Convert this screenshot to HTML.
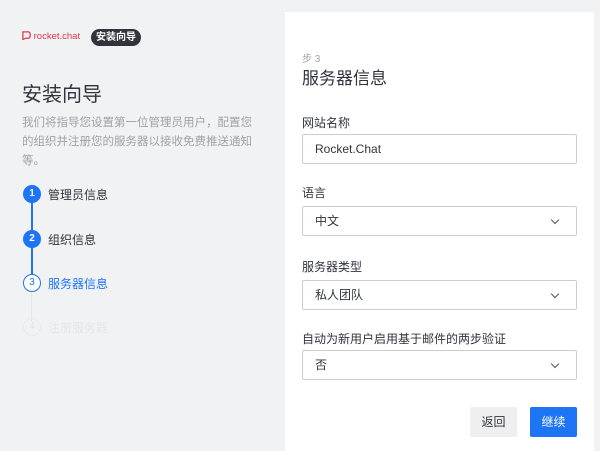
<html><head><style>
body{margin:0;width:600px;height:451px;background:#f1f2f4;font-family:"Liberation Sans","Noto Sans CJK SC",sans-serif;position:relative;overflow:hidden}
.a{position:absolute}
.panel{left:285px;top:12px;width:309px;height:439px;background:#fff}
.lbl{position:absolute;left:302px;font-size:12px;color:#2f343d}
.inp{position:absolute;left:302px;width:273px;height:28px;border:1px solid #cbced1;border-radius:2px;background:#fff;font-size:12px;color:#2f343d;line-height:28px;box-sizing:content-box}
.inp span{margin-left:12px}
.chev{position:absolute;right:18px;top:10px;width:5px;height:5px;border-right:1.2px solid #555;border-bottom:1.2px solid #555;transform:rotate(45deg)}
.c{position:absolute;left:23px;width:18px;height:18px;border-radius:50%;font-size:10px;text-align:center;line-height:18px;font-weight:bold}
.st{position:absolute;left:48px;font-size:12px;color:#2f343d}
</style></head><body>
<div class="a" style="left:22px;top:31px;font-size:9.5px;color:#e0364f">
<svg width="9" height="9" style="vertical-align:-1px" viewBox="0 0 10 10"><path d="M1 1h6a2 2 0 0 1 2 2v3a2 2 0 0 1-2 2H4L1 9.5Z" fill="none" stroke="#e0364f" stroke-width="1.4"/></svg> rocket.chat</div>
<div class="a" style="left:91px;top:29px;width:50px;height:17px;border-radius:9px;background:#2f343d;color:#fff;font-size:10px;font-weight:bold;text-align:center;line-height:17px">安装向导</div>
<div class="a" style="left:22px;top:78px;font-size:20px;color:#2f343d">安装向导</div>
<div class="a" style="left:22px;top:114px;width:232px;font-size:11.5px;line-height:19px;color:#9ea2a8">我们将指导您设置第一位管理员用户，配置您的组织并注册您的服务器以接收免费推送通知等。</div>
<div class="a" style="left:31px;top:200px;width:2px;height:78px;background:#1d74f5"></div>
<div class="a" style="left:31px;top:292px;width:1px;height:30px;background:#e4e6e9"></div>
<div class="c" style="top:185px;background:#1d74f5;color:#fff">1</div>
<div class="st" style="top:186px">管理员信息</div>
<div class="c" style="top:230px;background:#1d74f5;color:#fff">2</div>
<div class="st" style="top:231px">组织信息</div>
<div class="c" style="top:274px;background:#fff;border:1px solid #1d74f5;color:#1d74f5;width:16px;height:16px;line-height:16px;font-weight:normal">3</div>
<div class="st" style="top:275px;color:#1d74f5">服务器信息</div>
<div class="c" style="top:318px;border:1px solid #e8eaec;color:#e0e2e5;width:16px;height:16px;line-height:16px;font-weight:normal">4</div>
<div class="st" style="top:319px;color:#e4e6e9">注册服务器</div>
<div class="a panel"></div>
<div class="a" style="left:302px;top:50px;font-size:10px;color:#9ea2a8">步 3</div>
<div class="a" style="left:302px;top:64px;font-size:17px;color:#2f343d">服务器信息</div>
<div class="lbl" style="top:114px">网站名称</div>
<div class="inp" style="top:134px"><span>Rocket.Chat</span></div>
<div class="lbl" style="top:184px">语言</div>
<div class="inp" style="top:206px"><span>中文</span><i class="chev"></i></div>
<div class="lbl" style="top:258px">服务器类型</div>
<div class="inp" style="top:280px"><span>私人团队</span><i class="chev"></i></div>
<div class="lbl" style="top:330px">自动为新用户启用基于邮件的两步验证</div>
<div class="inp" style="top:350px"><span>否</span><i class="chev"></i></div>
<div class="a" style="left:470px;top:407px;width:47px;height:30px;background:#efeff0;border-radius:2px;font-size:12px;color:#2f343d;text-align:center;line-height:30px">返回</div>
<div class="a" style="left:530px;top:407px;width:47px;height:30px;background:#1d74f5;border-radius:2px;font-size:12px;color:#fff;text-align:center;line-height:30px">继续</div>
</body></html>
